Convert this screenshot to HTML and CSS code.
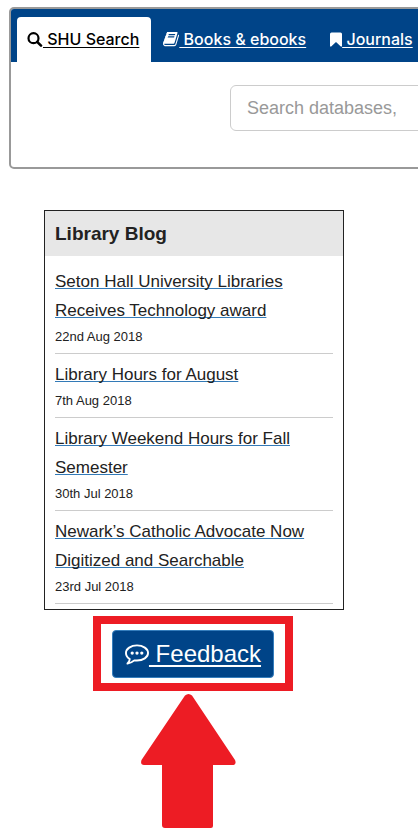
FILE: index.html
```
<!DOCTYPE html>
<html lang="en">
<head>
    <meta charset="UTF-8">
    <meta name="viewport" content="width=device-width, initial-scale=1.0">
    <title>SHU Libraries</title>
    <link rel="stylesheet" href="styles.css">
</head>
<body>
    <!-- Search box -->
    <section class="search-panel">
        <nav class="tabs">
            <a href="#search" class="tab active"><svg class="icon" width="16" height="15" viewBox="0 0 16 15"><circle cx="6.500" cy="6.200" r="5" fill="none" stroke="currentColor" stroke-width="2.2"/><path d="M10.200 9.800L14 13.600" stroke="currentColor" stroke-width="2.6" stroke-linecap="round"/></svg> SHU Search</a>
            <a href="#books" class="tab"><svg class="icon" width="16" height="15" viewBox="0 0 1664 1536"><path fill="currentColor" d="M1639 280q40 57 18 129l-275 906q-19 64-76.500 107.500t-122.500 43.500h-923q-77 0-148.500-53.500t-99.500-131.500q-24-67-2-127 0-4 3-27t4-37q1-8-3-21.500t-3-19.500q2-11 8-21t16.500-23.500 16.500-23.500q23-38 45-91.500t30-91.500q3-10 .500-30t-.500-28q3-11 17-28t17-23q21-36 42-92t25-90q1-9-2.500-32t.500-28q4-13 22-30.500t22-22.500q19-26 42.500-84.500t27.500-96.500q1-8-3-25.500t-2-26.500q2-8 9-18t18-23 17-21q8-12 16.500-30.500t15-35 16-36 19.500-32 26.500-23.500 36-11.500 47.500 5.500l-1 3q38-9 51-9h761q74 0 114 56t18 130l-274 906q-36 119-71.500 153.500t-128.500 34.500h-869q-27 0-38 15-11 16-1 43 24 70 144 70h923q29 0 56-15.500t35-41.500l300-987q7-22 5-57 38 15 59 43zm-1064 2q-4 13 2 22.500t20 9.500h608q13 0 25.500-9.500t16.500-22.500l21-64q4-13-2-22.500t-20-9.500h-608q-13 0-25.500 9.500t-16.500 22.500zm-83 256q-4 13 2 22.500t20 9.500h608q13 0 25.500-9.500t16.500-22.500l21-64q4-13-2-22.500t-20-9.500h-608q-13 0-25.500 9.500t-16.500 22.500z"/></svg> Books &amp; ebooks</a>
            <a href="#journals" class="tab"><svg class="icon" width="12" height="15" viewBox="0 0 12 15"><path fill="currentColor" d="M1.500 0.500h9q1.500 0 1.500 1.500v12.500h-1.200L6 10 1.200 14.500H0V2Q0 0.500 1.500 0.500z"/></svg> Journals</a>
        </nav>
        <form class="search-form">
            <input type="text" class="search-input" placeholder="Search databases," aria-label="Search databases">
        </form>
    </section>

    <!-- Blog posts -->
    <section class="blog">
        <h2>Library Blog</h2>
        <ul>
            <li>
                <a href="#post1">Seton Hall University Libraries Receives Technology award</a>
                <div class="date">22nd Aug 2018</div>
            </li>
            <li>
                <a href="#post2">Library Hours for August</a>
                <div class="date">7th Aug 2018</div>
            </li>
            <li>
                <a href="#post3">Library Weekend Hours for Fall Semester</a>
                <div class="date">30th Jul 2018</div>
            </li>
            <li>
                <a href="#post4">Newark’s Catholic Advocate Now Digitized and Searchable</a>
                <div class="date">23rd Jul 2018</div>
            </li>
        </ul>
    </section>

    <!-- Feedback callout -->
    <div class="callout">
        <div class="frame">
            <a href="#feedback" class="feedback"><svg class="icon" width="24" height="21" viewBox="0 0 25 21"><path fill="none" stroke="currentColor" stroke-width="2" stroke-linejoin="round" d="M12.500 1C18.800 1 24 4.500 24 8.900S18.800 16.800 12.500 16.800Q11 16.800 9.700 16.600Q6.500 19.400 2.600 19.900Q4.700 17.900 5 15.200C2.500 13.700 1 11.500 1 8.900 1 4.500 6.200 1 12.500 1z"/><circle cx="7.500" cy="9" r="1.700" fill="currentColor"/><circle cx="12.500" cy="9" r="1.700" fill="currentColor"/><circle cx="17.500" cy="9" r="1.700" fill="currentColor"/></svg> Feedback</a>
        </div>
        <svg class="arrow" width="96" height="135" viewBox="0 0 96 135"><path fill="#ed1c24" d="M45 1.500Q48.500-1.500 52 1.500L95 66Q97 71 92 71H73V132Q73 134 71 134H25Q22 134 22 131V71H4Q0 71 1.500 66z"/></svg>
    </div>
</body>
</html>
```

FILE: styles.css
```
* {
    box-sizing: border-box;
}
body {
    margin: 0;
    padding: 7px 0 0;
    background-color: #fff;
    color: #222;
    font-family: "Liberation Sans", Arial, sans-serif;
    overflow-x: hidden;
}
.search-panel {
    margin: 0 -10px 0 9px;
    border: 2px solid #999;
    border-radius: 5px;
    overflow: hidden;
}
.tabs {
    display: flex;
    gap: 2px;
    padding: 8px 6px 0;
    background-color: #004488;
}
.tab {
    padding: 0 12px 0 10px;
    border-radius: 4px 4px 0 0;
    color: #fff;
    font-family: Inter, sans-serif;
    font-size: 16px;
    font-weight: 500;
    line-height: 45px;
    white-space: nowrap;
    text-decoration-thickness: 1px;
    text-underline-offset: 2px;
    text-decoration-skip-ink: none;
}
.tab .icon {
    vertical-align: -2px;
}
.tab.active {
    background-color: #fff;
    color: #000;
}
.search-form {
    padding: 23px 0 36px 219px;
}
.search-input {
    display: block;
    width: 100%;
    height: 46px;
    padding: 0 16px;
    border: 1px solid #ccc;
    border-radius: 6px;
    font-family: inherit;
    font-size: 18px;
}
.search-input::placeholder {
    color: #999;
}
.blog {
    max-width: 300px;
    margin: 41px 0 0 44px;
    border: 1px solid #222;
}
.blog h2 {
    margin: 0;
    padding: 0 10px;
    background-color: #e7e7e7;
    font-size: 19px;
    line-height: 45px;
}
.blog ul {
    margin: 0;
    padding: 5px 10px;
    list-style: none;
}
.blog li {
    padding: 6px 0 4px;
    border-bottom: 1px solid #ccc;
    font-size: 17px;
    line-height: 29px;
}
.blog a {
    color: #222;
    text-decoration-color: #337ab7;
    text-decoration-thickness: 1px;
    text-underline-offset: 1px;
    text-decoration-skip-ink: none;
}
.date {
    font-size: 13px;
    line-height: 24px;
}
.callout {
    width: 200px;
    margin: 6px 0 0 93px;
}
.frame {
    display: flex;
    justify-content: center;
    padding: 6px 0 5px;
    border: 8px solid #ed1c24;
}
.feedback {
    padding: 0 12px;
    border: 1px solid #357ebd;
    border-radius: 4px;
    background-color: #004488;
    color: #fff;
    font-size: 24px;
    line-height: 46px;
    text-decoration-thickness: 2px;
    text-underline-offset: 3px;
}
.feedback .icon {
    vertical-align: -3px;
}
.arrow {
    display: block;
    margin: 3px 0 0 47px;
}
```
